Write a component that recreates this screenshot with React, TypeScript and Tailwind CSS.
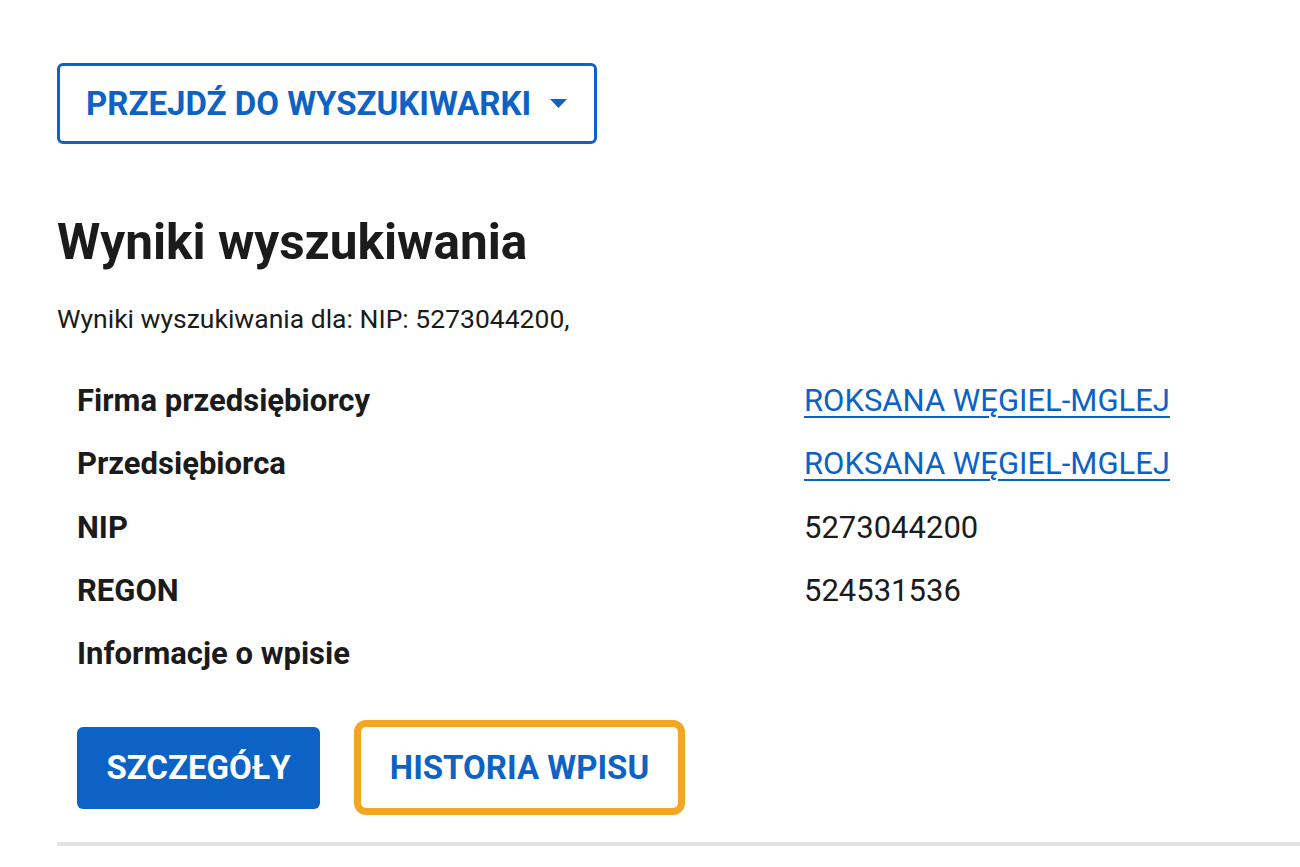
import { FC } from "react";

const rows: { label: string; value?: string; link?: boolean }[] = [
  { label: "Firma przedsiębiorcy", value: "ROKSANA WĘGIEL-MGLEJ", link: true },
  { label: "Przedsiębiorca", value: "ROKSANA WĘGIEL-MGLEJ", link: true },
  { label: "NIP", value: "5273044200" },
  { label: "REGON", value: "524531536" },
  { label: "Informacje o wpisie" },
];

const App: FC = () => {
  return (
    <div className="min-h-screen bg-white font-['Roboto','Liberation_Sans',sans-serif] text-[#1b1b1b] overflow-hidden">
      <div className="pl-[57px] pt-[63px]">
        {/* Search toggle */}
        <button className="inline-flex h-[81px] items-center gap-[19px] rounded-md border-[3px] border-[#0d62c5] bg-white pl-[26px] pr-[27px] text-[33px] font-bold uppercase text-[#0d62c5]">
          Przejdź do wyszukiwarki
          <svg width="17" height="9" viewBox="0 0 17 9" className="fill-[#0d62c5]">
            <path d="M0 0h17L8.5 9z" />
          </svg>
        </button>

        <h1 className="mt-[69px] text-[49.5px] font-bold leading-[59px]">Wyniki wyszukiwania</h1>
        <p className="mt-[30px] text-[26.5px] leading-[34px]">Wyniki wyszukiwania dla: NIP: 5273044200,</p>

        {/* Results */}
        <div className="mt-[46px] pl-[20px]">
          <dl className="grid grid-cols-[727px_1fr] gap-y-[25.25px] text-[31px] leading-[38px]">
            {rows.map((r) => (
              <div key={r.label} className="contents">
                <dt className="font-bold">{r.label}</dt>
                <dd>
                  {r.value &&
                    (r.link ? (
                      <a href="#" className="text-[#0d62c5] underline underline-offset-[5px] decoration-2">
                        {r.value}
                      </a>
                    ) : (
                      r.value
                    ))}
                </dd>
              </div>
            ))}
          </dl>

          <div className="mt-[47px] flex items-center gap-[34px]">
            <button className="h-[82px] w-[243px] rounded-md bg-[#0d62c5] text-[33px] font-bold uppercase text-white">
              Szczegóły
            </button>
            <button className="h-[95px] w-[331px] rounded-[12px] border-[7px] border-[#f4a623] bg-white text-[33px] font-bold uppercase text-[#0d62c5]">
              Historia wpisu
            </button>
          </div>
        </div>

        <div className="mt-[27px] h-[4px] bg-[#e3e3e3]" />
      </div>
    </div>
  );
};

export default App;
